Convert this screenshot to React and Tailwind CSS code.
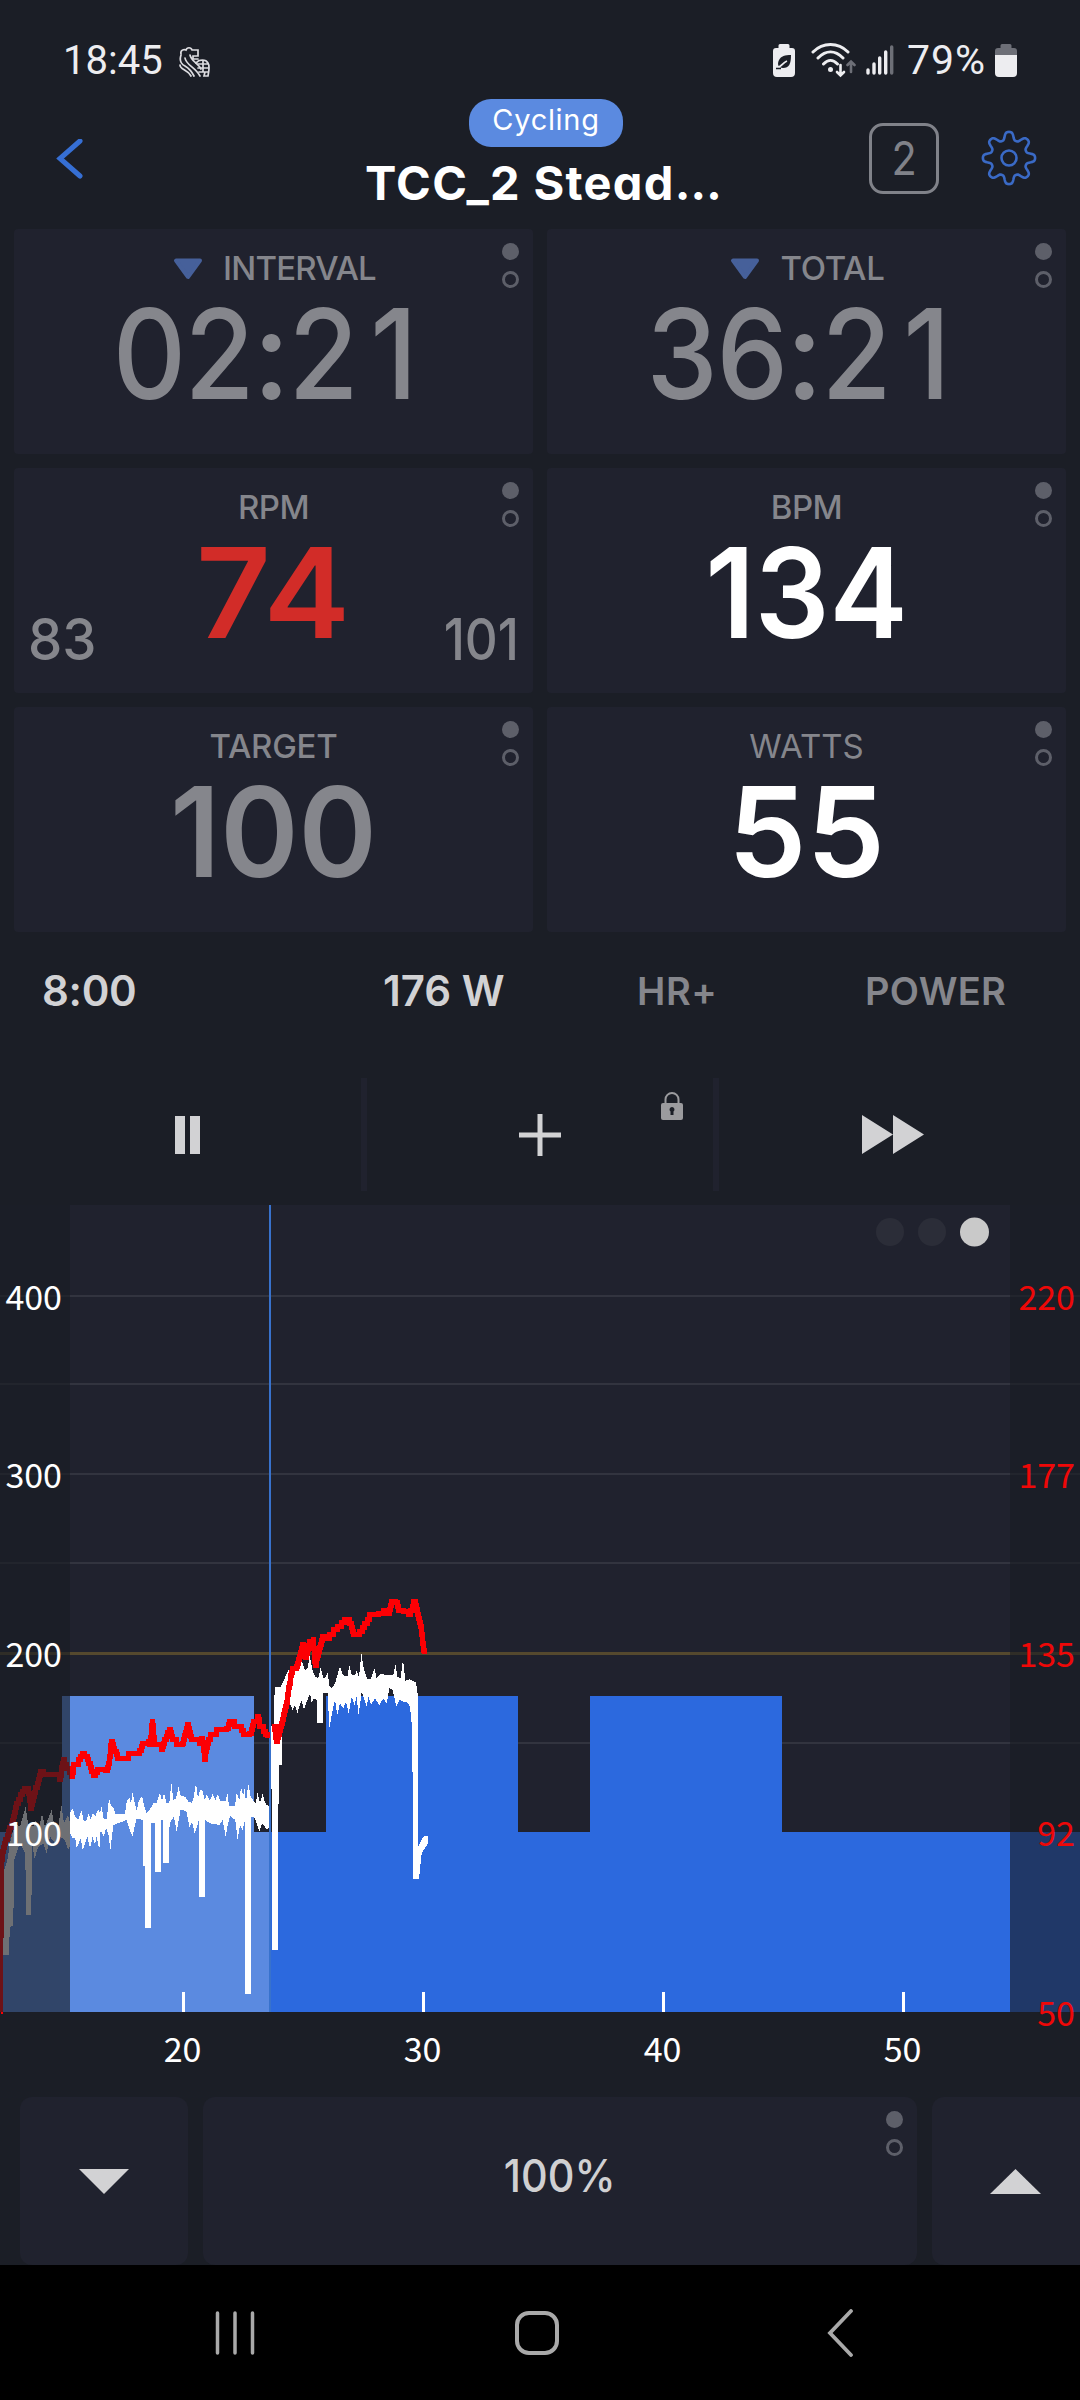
import React from "react";

const fontPoppins =
  "font-['Inter','Liberation_Sans',sans-serif] [font-feature-settings:'cv11']";

// power trace, units are a third of a pixel
const POWER_GHOST =
  "8,1356 8,945 22,900 30,850 45,790 60,800 77,740 84,790 100,800 108,780 116,810 126,760 135,800 155,750 162,790 175,800 184,735 192,790 204,765 210,790 210,860 204,870 195,840 180,830 165,850 150,830 140,880 130,850 115,860 104,895 96,850 94,1065 78,1065 76,880 60,850 42,900 40,1098 30,1100 26,1185 10,1185";

const POWER_WARMUP =
  "30,130 38,115 45,140 55,150 64,120 72,155 80,150 85,130 92,148 99,128 106,140 114,118 120,130 125,108 130,145 140,148 147,85 152,105 160,112 166,132 195,133 200,95 208,82 213,100 218,66 224,98 230,122 236,95 246,78 252,105 260,130 270,118 280,100 290,98 300,66 306,95 312,68 320,100 328,98 334,38 340,90 348,85 356,50 362,78 375,80 385,95 395,98 400,88 408,40 414,85 420,60 428,62 434,90 440,75 450,92 458,72 466,90 474,72 480,92 498,92 502,66 507,108 525,108 530,70 538,90 543,50 550,80 552,44 558,95 565,42 572,80 580,92 588,100 592,66 600,100 608,70 614,95 620,105 626,108 " +
  "626,175 618,178 612,165 606,160 598,185 590,160 582,140 573,140 573,672 555,672 555,150 548,180 540,165 533,210 526,150 510,138 503,165 497,200 488,150 478,165 450,160 435,150 435,381 417,381 417,150 404,190 396,155 388,172 380,125 362,118 350,185 342,140 332,155 327,180 327,279 309,279 309,150 303,150 303,306 285,306 285,160 273,158 273,474 255,474 255,288 249,288 249,150 230,145 217,200 208,175 200,150 160,165 151,240 145,190 138,175 132,200 122,180 118,240 110,200 105,225 98,200 90,235 82,200 68,240 62,205 50,235 46,205 38,205 30,190";

const POWER_INTERVAL =
  "44,292 62,290 72,270 85,240 100,248 115,215 125,212 135,240 143,235 149,195 157,240 165,260 175,265 182,232 190,265 197,262 203,248 208,288 216,295 225,280 240,228 248,255 262,260 268,225 275,255 285,255 290,243 297,262 304,190 312,240 322,268 332,268 343,235 350,265 362,250 375,255 400,255 406,222 412,260 422,265 429,208 436,272 450,268 468,278 474,320 474,770 490,740 504,738 504,760 485,790 477,867 460,867 458,580 456,410 450,350 " +
  "440,335 430,335 418,330 409,350 398,300 388,295 380,340 370,325 358,345 345,325 333,345 325,320 320,350 314,330 305,305 296,375 290,320 284,345 275,320 266,370 258,335 250,355 240,340 232,375 225,330 218,360 208,415 203,310 190,310 189,400 172,400 170,330 162,325 155,340 150,310 140,335 132,360 124,330 118,350 112,370 105,345 98,360 90,340 84,330 65,430 65,526 56,526 54,1080 36,1080 34,410 42,400";

const HEART =
  "2,1356 4,900 14,850 26,815 42,770 50,730 62,705 75,686 85,690 92,745 100,710 112,670 122,635 130,645 175,645 180,660 190,600 200,625 215,650 222,615 235,600 248,582 262,600 280,648 292,630 318,632 328,600 334,545 345,575 352,595 375,595 385,580 415,582 428,550 445,545 450,555 457,485 464,555 485,570 495,540 508,508 518,540 530,555 548,550 562,495 575,540 600,550 606,535 614,598 622,550 632,525 650,508 680,505 690,485 705,500 722,500 730,525 750,520 762,485 772,470 780,500 792,515 803,533";

const HEART_INTERVAL =
  "816,510 824,500 829,545 845,490 858,440 868,370 878,325 890,320 900,290 908,255 918,292 928,245 940,240 946,317 955,275 968,230 980,235 1000,210 1012,200 1035,178 1050,190 1060,225 1080,215 1095,190 1110,165 1135,160 1150,152 1165,160 1176,125 1188,128 1195,152 1212,155 1225,165 1242,125 1255,175 1262,200 1268,250 1274,282";

// heart rate is recorded in whole beats, so the line moves in steps
const toSteps = (points) => {
  const pts = points.split(" ").map((p) => p.split(",").map(Number));
  const out = [];
  for (let i = 0; i < pts.length - 1; i++) {
    const [x0, y0] = pts[i];
    const [x1, y1] = pts[i + 1];
    const n = Math.max(1, Math.round(Math.abs(y1 - y0) / 12));
    for (let k = 0; k < n; k++) {
      const y = y0 + ((y1 - y0) * k) / n;
      out.push(`${x0 + ((x1 - x0) * k) / n},${y}`);
      out.push(`${x0 + ((x1 - x0) * (k + 1)) / n},${y}`);
    }
  }
  out.push(pts[pts.length - 1].join(","));
  return out.join(" ");
};

const GEAR = Array.from({ length: 192 }, (_, i) => {
  const t = (i / 192) * Math.PI * 2;
  const r = 22.2 + (3.9 * Math.tanh(1.5 * Math.cos(8 * t))) / Math.tanh(1.5);
  return `${(r * Math.cos(t)).toFixed(2)},${(r * Math.sin(t)).toFixed(2)}`;
}).join(" ");

const PageDots = ({ className = "" }) => (
  <div className={`absolute flex flex-col gap-[11px] ${className}`}>
    <span className="w-[17px] h-[17px] rounded-full bg-[#5d5f69]" />
    <span className="w-[17px] h-[17px] rounded-full border-3 border-[#5d5f69]" />
  </div>
);

const Marker = () => (
  <svg width="30" height="22" viewBox="0 0 30 22" className="mr-[20px] ml-[2px]">
    <path
      d="M3 2.5h24L15 19z"
      fill="#46609a"
      stroke="#46609a"
      strokeWidth="4"
      strokeLinejoin="round"
    />
  </svg>
);

const Card = ({ label, labelClass, marker, children }) => (
  <div className="relative h-[225px] rounded-[4px] bg-[#20222e]">
    <div className="flex h-[78px] items-center justify-center pt-[2px] text-[33px] text-[#85868c]">
      {marker && <Marker />}
      <span className={labelClass}>{label}</span>
    </div>
    {children}
    <PageDots className="right-[14px] top-[14px]" />
  </div>
);

// every digit sits in its own cell so the clock does not jump
const Clock = ({ value }) => (
  <div className="flex h-[92px] justify-center pr-[4px] text-[125px] leading-[94px] font-medium text-[#85868c]">
    {value.split("").map((c, i) => (
      <span
        key={i}
        className={
          c === ":"
            ? "flex w-[34px] justify-center"
            : "flex w-[70px] justify-center"
        }
      >
        <span className={c === ":" ? "" : "scale-x-[0.91]"}>{c}</span>
      </span>
    ))}
  </div>
);

const StatusBar = () => (
  <div className="flex h-[93px] shrink-0 items-center pt-[27px] pl-[63px] pr-[63px] font-['Roboto',sans-serif] text-[40px] text-[#ededf0]">
    <span className="w-[100px] pt-[2px]">18:45</span>
    <svg width="34" height="34" viewBox="0 0 34 34" className="ml-[15px] mt-[6px]" fill="none" stroke="#dcdce0" strokeWidth="1.7" strokeLinecap="round">
      <path d="M3 8c-1-4 3-5 5-4 1-3 5-3 6 0h6v6h-5v3h5" />
      <path d="M3 9c-2 6 0 9 4 11 5 3 7 6 9 10" />
      <path d="M2 19c0 3 3 4 6 6 2 1 4 3 5 5M7 12c1 7 10 9 15 18M12 9c1 6 8 8 11 14" />
      <path d="M18 17c3-4 10-4 12 0 2 3 1 8 0 13h-4l1-4M20 18h10M20 22h11M25 15v11M21 26h9" />
    </svg>
    <div className="ml-auto flex items-center">
      <svg width="22" height="33" viewBox="0 0 22 33" className="mr-[16px]">
        <path d="M7 0h8a1.500 1.500 0 0 1 1.500 1.500V4H19a3 3 0 0 1 3 3v22a4 4 0 0 1-4 4H4a4 4 0 0 1-4-4V7a3 3 0 0 1 3-3h2.500V1.500A1.500 1.500 0 0 1 7 0z" fill="#ededf0" />
        <path d="M18 11c0 9-2 13-8 13-5 0-6-4-4-8 2-4 6-5 12-5z" fill="#1b1e26" />
        <path d="M3 24c5 0 6-5 11-7" stroke="#ededf0" strokeWidth="1.800" fill="none" />
        <path d="M3 24.500h5" stroke="#1b1e26" strokeWidth="1.500" />
      </svg>
      <svg width="45" height="36" viewBox="0 0 45 36" className="mr-[10px]" fill="none" stroke="#ededf0" strokeWidth="3" strokeLinecap="round">
        <path d="M2 10c10-10 25-10 35 0M7 16c8-8 17-8 25 0M12.500 22c5-5 9-5 14 0" />
        <circle cx="19.500" cy="27.500" r="2.500" fill="#ededf0" stroke="none" />
        <path d="M29.500 23v10M26 30l3.500 3.500L33 30" strokeWidth="2.600" />
        <path d="M40 30V20M36.500 23l3.500-3.500 3.500 3.500" stroke="#6d6f77" strokeWidth="2.600" />
      </svg>
      <svg width="28" height="30" viewBox="0 0 28 30" className="mr-[13px]" strokeWidth="3.400" strokeLinecap="round" stroke="#ededf0">
        <path d="M2 25v3M8 19v9M13.700 13v15M19.700 7v21" />
        <path d="M25.700 2v26" stroke="#6d6f77" />
      </svg>
      <span className="w-[83px] pt-[2px] text-[41px] tracking-[1px]">79%</span>
      <svg width="22" height="33" viewBox="0 0 22 33" className="ml-[5px]">
        <path d="M7 0h8a1.500 1.500 0 0 1 1.500 1.500V4H19a3 3 0 0 1 3 3v4H0V7a3 3 0 0 1 3-3h2.500V1.500A1.500 1.500 0 0 1 7 0z" fill="#6d6f77" />
        <path d="M0 11h22v18a4 4 0 0 1-4 4H4a4 4 0 0 1-4-4z" fill="#ededf0" />
      </svg>
    </div>
  </div>
);

const Header = () => (
  <div className="flex h-[136px] shrink-0">
    <div className="flex w-[366px] pl-[55px] pt-[46px]">
      <svg width="30" height="40" viewBox="0 0 30 40" fill="none" stroke="#366fd4" strokeWidth="5" strokeLinecap="round" strokeLinejoin="miter">
        <path d="M25 2L5 19.500L25 37" />
      </svg>
    </div>
    <div className="flex w-[356px] flex-col items-center pt-[6px]">
      <div className="ml-[4px] flex h-[48px] w-[154px] items-center justify-center rounded-[22px] bg-[#5b8ae0] pb-[6px] text-[29px] tracking-[0.700px] text-white">
        Cycling
      </div>
      <div className="h-[70px] whitespace-nowrap text-[47px] font-bold leading-[72px] tracking-[1.3px] text-white">
        TCC_2 Stead…
      </div>
    </div>
    <div className="flex flex-1 pl-[147px] pt-[30px]">
      <div className="flex h-[71px] w-[70px] items-center justify-center rounded-[14px] border-3 border-[#808289] text-[46px] font-normal text-[#808289]">
        <span className="scale-x-90">2</span>
      </div>
      <svg width="56" height="56" viewBox="-28 -28 56 56" className="ml-[42px] mt-[7px]" fill="none" stroke="#3a6ac6" strokeWidth="2.600" strokeLinejoin="round">
        <polygon points={GEAR} />
        <circle r="7.500" />
      </svg>
    </div>
  </div>
);

const Controls = () => (
  <div className="flex h-[113px] shrink-0 px-[14px]">
    <div className="flex w-[347px] items-center justify-center">
      <svg width="25" height="38" viewBox="0 0 25 38" fill="#d2d2d4">
        <path d="M0 0h10v38H0zM15 0H25v38h-10z" />
      </svg>
    </div>
    <div className="w-[6px] bg-[#20222e]" />
    <div className="relative flex w-[346px] items-center justify-center">
      <svg width="42" height="42" viewBox="0 0 42 42" stroke="#d2d2d4" strokeWidth="5">
        <path d="M21 0v42M0 21h42" />
      </svg>
      <svg width="22" height="28" viewBox="0 0 22 28" className="absolute right-[30px] top-[14px]">
        <path d="M4.500 12V7.500a6.500 6.500 0 0 1 13 0V12" fill="none" stroke="#9b9b9e" strokeWidth="2" />
        <rect y="11" width="22" height="17" rx="2" fill="#9b9b9e" />
        <path d="M11 15a2.500 2.500 0 0 1 1.500 4.500V23h-3v-3.500A2.500 2.500 0 0 1 11 15z" fill="#1b1e26" />
      </svg>
    </div>
    <div className="w-[6px] bg-[#20222e]" />
    <div className="flex flex-1 items-center justify-center">
      <svg width="62" height="39" viewBox="0 0 62 39" fill="#d2d2d4">
        <path d="M0 0l31 19.500L0 39zM31 0l31 19.500L31 39z" />
      </svg>
    </div>
  </div>
);

const GRID = [1296, 1384, 1474, 1563, 1743];
const POWER_AXIS = [
  [400, 1310],
  [300, 1488],
  [200, 1667],
  [100, 1846],
];
const HEART_AXIS = [
  [220, 1310],
  [177, 1488],
  [135, 1667],
  [92, 1846],
  [50, 2026],
];
const MINUTES = [20, 30, 40, 50];
const minuteX = (m) => 183.5 + (m - 20) * 24;

const Chart = () => (
  <svg width="1080" height="892" viewBox="0 1205 1080 892" className="shrink-0 font-['Noto_Sans_CJK_JP','Noto_Sans',sans-serif] text-[34px]">
    <rect y="1205" width="1080" height="807" fill="#20222e" />
    {GRID.map((y) => (
      <rect key={y} y={y - 1} width="1080" height="2" fill="#32343f" />
    ))}
    <rect y="1652" width="1080" height="3" fill="#55492e" />
    <g fill="#5b8ae0">
      <rect y="1832" width="270" height="180" />
      <rect x="62" y="1696" width="192" height="316" />
    </g>
    <g fill="#2c69de">
      <rect x="269" y="1832" width="811" height="180" />
      <rect x="326" y="1696" width="192" height="316" />
      <rect x="590" y="1696" width="192" height="316" />
    </g>
    <rect x="269" y="1205" width="2" height="807" fill="#3872cc" />
    <g transform="translate(0 1560) scale(0.33333)" shapeRendering="crispEdges">
      <g fill="#fff">
        <polygon points={POWER_GHOST} />
        <polygon points={POWER_WARMUP} transform="translate(180 630)" />
        <polygon points={POWER_INTERVAL} transform="translate(780 90)" />
      </g>
      <g fill="none" stroke="#fc0004" strokeWidth="15">
        <polyline points={toSteps(HEART)} />
        <polyline points={toSteps(HEART_INTERVAL)} />
      </g>
    </g>
    <g fill="#fff">
      {MINUTES.map((m) => (
        <rect key={m} x={minuteX(m) - 1.5} y="1992" width="3" height="20" />
      ))}
    </g>
    {/* outside of the visible window */}
    <g fill="#1a1c23" opacity="0.63">
      <rect y="1205" width="70" height="807" />
      <rect x="1010" y="1205" width="70" height="807" />
    </g>
    <circle cx="890" cy="1232" r="14" fill="#2b2d38" />
    <circle cx="932" cy="1232" r="14" fill="#2b2d38" />
    <circle cx="974.500" cy="1232" r="14.500" fill="#c9c9c9" />
    <g fill="#fff">
      {POWER_AXIS.map(([v, y]) => (
        <text key={v} x="62" y={y} textAnchor="end">{v}</text>
      ))}
      {MINUTES.map((m) => (
        <text key={m} x={minuteX(m) - 1} y="2062" textAnchor="middle">{m}</text>
      ))}
    </g>
    <g fill="#ee0808">
      {HEART_AXIS.map(([v, y]) => (
        <text key={v} x="1075" y={y} textAnchor="end">{v}</text>
      ))}
    </g>
  </svg>
);

const Intensity = () => (
  <div className="flex h-[168px] shrink-0 gap-[15px] pl-[20px]">
    <div className="flex w-[168px] shrink-0 items-center justify-center rounded-[12px] bg-[#20222e]">
      <svg width="50" height="25" viewBox="0 0 50 25" fill="#d2d2d4">
        <path d="M0 0h50L25 25z" />
      </svg>
    </div>
    <div className="relative flex w-[714px] shrink-0 items-center justify-center rounded-[12px] bg-[#20222e] pb-[10px] text-[45px] font-medium text-[#d0d0d2]">
      <span className="scale-x-[0.92]">100%</span>
      <PageDots className="right-[14px] top-[14px]" />
    </div>
    <div className="flex flex-1 items-center rounded-l-[12px] bg-[#20222e] pl-[58px]">
      <svg width="51" height="25" viewBox="0 0 51 25" fill="#d2d2d4">
        <path d="M0 25h51L25.500 0z" />
      </svg>
    </div>
  </div>
);

const NavBar = () => (
  <div className="flex h-[135px] shrink-0 items-center bg-black pl-[215px]">
    <svg width="40" height="44" viewBox="0 0 40 44" stroke="#a9a9a9" strokeWidth="3.500" strokeLinecap="round">
      <path d="M2.500 2v40M20 2v40M37.500 2v40" />
    </svg>
    <div className="ml-[260px] h-[44px] w-[44px] rounded-[14px] border-4 border-[#a9a9a9]" />
    <svg width="28" height="48" viewBox="0 0 28 48" className="ml-[267px]" fill="none" stroke="#a9a9a9" strokeWidth="3.800" strokeLinecap="round">
      <path d="M25 2L4 24L25 46" />
    </svg>
  </div>
);

const App = () => {
  return (
    <div className={`flex h-[2400px] w-[1080px] flex-col overflow-hidden bg-[#1b1e26] ${fontPoppins}`}>
      <StatusBar />
      <Header />

      <div className="grid shrink-0 grid-cols-2 gap-[14px] px-[14px]">
        <Card label="INTERVAL" labelClass="font-medium tracking-[-0.8px]" marker>
          <Clock value="02:21" />
        </Card>
        <Card label="TOTAL" labelClass="font-medium tracking-[-0.3px]" marker>
          <Clock value="36:21" />
        </Card>
        <Card label="RPM" labelClass="font-medium tracking-[-0.5px]">
          <div className="flex h-[92px] justify-between px-[14px] leading-[94px]">
            <span className="w-[90px] origin-left scale-x-[0.94] pt-[46px] text-[58px] font-medium text-[#85868c]">83</span>
            <span className="scale-x-[1.04] text-[125px] font-semibold text-[#d22c28]">74</span>
            <span className="flex w-[90px] origin-right scale-x-[0.88] justify-end pt-[46px] text-[58px] font-medium text-[#85868c]">101</span>
          </div>
        </Card>
        <Card label="BPM" labelClass="font-medium tracking-[-0.5px]">
          <div className="scale-x-[0.94] text-center text-[125px] font-semibold leading-[94px] text-white">134</div>
        </Card>
        <Card label="TARGET" labelClass="font-medium tracking-[-0.3px]">
          <div className="scale-x-[0.95] text-center text-[125px] font-semibold leading-[94px] text-[#85868c]">100</div>
        </Card>
        <Card label="WATTS" labelClass="font-normal">
          <div className="text-center text-[125px] font-semibold leading-[94px] text-white">55</div>
        </Card>
      </div>

      <div className="flex h-[146px] shrink-0 items-center whitespace-nowrap pb-[30px] pl-[42px] text-[42px] font-semibold text-[#d2d2d4]">
        <span className="w-[341px] tracking-[-0.3px]">8:00</span>
        <span className="w-[254px]">176 W</span>
        <span className="w-[228px] pt-[2px] text-[38px] tracking-[0.6px] text-[#85868c]">HR+</span>
        <span className="pt-[2px] text-[38px] tracking-[0.3px] text-[#85868c]">POWER</span>
      </div>

      <Controls />
      <div className="h-[14px] shrink-0" />
      <Chart />
      <Intensity />
      <NavBar />
    </div>
  );
};

export default App;
